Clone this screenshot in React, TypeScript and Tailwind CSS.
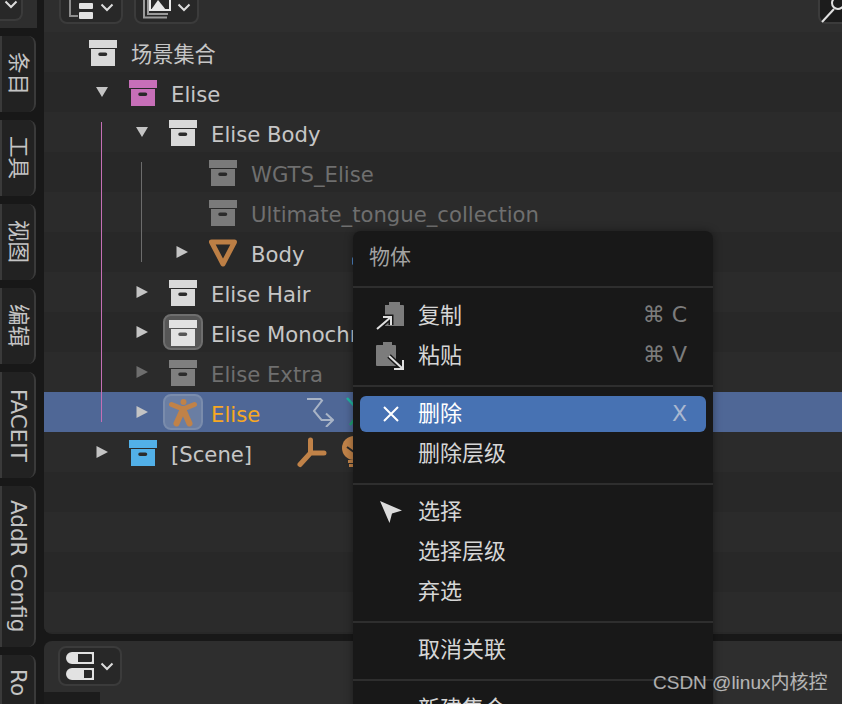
import type { ReactNode } from 'react';

const FONT = "font-['DejaVu_Sans','Noto_Sans_CJK_SC',sans-serif]";

function BoxIcon({ color }: { color: string }) {
  return (
    <svg width="28" height="26" viewBox="0 0 28 26" className="shrink-0">
      <rect x="0" y="0" width="28" height="8" fill={color} />
      <path
        fillRule="evenodd"
        fill={color}
        d="M2 9h24v17H2z M11 12.5a1.5 1.5 0 0 0 0 3.5h5.5a1.5 1.5 0 0 0 0-3.5z"
      />
    </svg>
  );
}

function Tri({ down, dim }: { down?: boolean; dim?: boolean }) {
  return (
    <svg width="12" height="12" viewBox="0 0 12 12">
      <path
        d={down ? 'M0 1h12L6 11z' : 'M0.5 0L12 6L0.5 12z'}
        fill={dim ? '#6e6e6e' : '#c4c4c4'}
      />
    </svg>
  );
}

function Chevron() {
  return (
    <svg width="14" height="9" viewBox="0 0 14 9" fill="none" stroke="#dcdcdc" strokeWidth="2">
      <path d="M1.5 1.5L7 7l5.5-5.5" />
    </svg>
  );
}

function MeshIcon() {
  return (
    <svg width="28" height="28" viewBox="0 0 28 28" fill="none">
      <path d="M2.5 3h23L14 25z" stroke="#bd7f45" strokeWidth="5" strokeLinejoin="round" />
    </svg>
  );
}

function ArmatureIcon() {
  return (
    <svg width="28" height="28" viewBox="0 0 28 28" fill="none" stroke="#c08248" strokeLinecap="round">
      <circle cx="14.5" cy="3" r="3" fill="#c08248" stroke="none" />
      <path d="M2.5 5.5L14 10 25.5 5.5" strokeWidth="5" />
      <path d="M14 10L7.5 24.5M14 10L20.5 24.5" strokeWidth="6" />
    </svg>
  );
}

function ModifierIcon() {
  return (
    <svg width="28" height="30" viewBox="0 0 28 30" fill="none" stroke="#a9b4c6" strokeWidth="2" className="shrink-0">
      <path d="M1 2h13.5l1.5 1.5-8 10.5 7.5 9h11" />
      <path d="M20 16.5l7 6.5-7 7" />
    </svg>
  );
}

function BoneIcon() {
  return (
    <svg width="14" height="30" viewBox="0 0 14 30" fill="none" strokeWidth="2.5" className="ml-3 shrink-0">
      <path d="M1 1l13 14" stroke="#1fb5a0" />
      <path d="M4 28l10-13" stroke="#1fa070" />
    </svg>
  );
}

function EmptyIcon() {
  return (
    <svg width="30" height="32" viewBox="0 0 30 32" fill="none" stroke="#c08248" strokeWidth="5" strokeLinecap="round" className="shrink-0">
      <path d="M13.5 4v13L3 28.5M13.5 17H27" />
    </svg>
  );
}

function BulbIcon() {
  return (
    <svg width="30" height="32" viewBox="0 0 30 32" className="ml-[13px] shrink-0">
      <circle cx="14" cy="12" r="12" fill="#c08248" />
      <path d="M7 11l7 5 7-5M14 16v7" fill="none" stroke="#2b2b2b" strokeWidth="2" />
      <rect x="8" y="24" width="12" height="3" fill="#c08248" />
      <rect x="9" y="28" width="10" height="3" fill="#c08248" />
    </svg>
  );
}

type Row = {
  depth: number;
  label: string;
  icon: ReactNode;
  arrow?: 'down' | 'right';
  dim?: boolean;
  active?: string;
  labelClass?: string;
  bg?: string;
  extra?: ReactNode;
};

const ROWS: Row[] = [
  { depth: 0, label: '场景集合', icon: <BoxIcon color="#d9d9d9" /> },
  { depth: 1, label: 'Elise', icon: <BoxIcon color="#c76fb8" />, arrow: 'down' },
  { depth: 2, label: 'Elise Body', icon: <BoxIcon color="#d9d9d9" />, arrow: 'down' },
  { depth: 3, label: 'WGTS_Elise', icon: <BoxIcon color="#7a7a7a" />, dim: true },
  { depth: 3, label: 'Ultimate_tongue_collection', icon: <BoxIcon color="#7a7a7a" />, dim: true },
  {
    depth: 3,
    label: 'Body',
    icon: <MeshIcon />,
    arrow: 'right',
    extra: <span className="ml-[47px] h-[8px] w-[3px] translate-y-[9px] rounded-sm bg-[#4f86c6]" />,
  },
  { depth: 2, label: 'Elise Hair', icon: <BoxIcon color="#d9d9d9" />, arrow: 'right' },
  {
    depth: 2,
    label: 'Elise Monochrome',
    icon: <BoxIcon color="#e2e2e2" />,
    arrow: 'right',
    active: 'bg-[#565656] border-[#6e6e6e]',
  },
  { depth: 2, label: 'Elise Extra', icon: <BoxIcon color="#7f7f7f" />, arrow: 'right', dim: true },
  {
    depth: 2,
    label: 'Elise',
    icon: <ArmatureIcon />,
    arrow: 'right',
    active: 'bg-[#6a7ea3] border-[#7a8cac]',
    labelClass: 'text-[#f7a823]',
    bg: 'bg-[#4f6796]',
    extra: (
      <>
        <span className="w-[46px] shrink-0" />
        <ModifierIcon />
        <BoneIcon />
      </>
    ),
  },
  {
    depth: 1,
    label: '[Scene]',
    icon: <BoxIcon color="#52b0e8" />,
    arrow: 'right',
    extra: (
      <>
        <span className="w-[45px] shrink-0" />
        <EmptyIcon />
        <BulbIcon />
      </>
    ),
  },
];

const STRIPES = [0, 1, 2, 3];

function TreeRow({ row, index }: { row: Row; index: number }) {
  const stripe = index % 2 === 0 ? 'bg-[#2b2b2b]' : 'bg-[#282828]';
  return (
    <div className={`flex h-10 items-center pl-[5px] ${row.bg ?? stripe}`}>
      <div className="shrink-0" style={{ width: row.depth * 40 }} />
      <div className="flex w-10 shrink-0 items-center pl-[7px]">
        {row.arrow && <Tri down={row.arrow === 'down'} dim={row.dim} />}
      </div>
      <div className="relative flex h-10 w-10 shrink-0 items-center pl-0 pt-0.5">
        {row.active && (
          <div className={`absolute -left-[6px] top-[2px] h-[36px] w-[40px] rounded-lg border-2 ${row.active}`} />
        )}
        <div className="relative">{row.icon}</div>
      </div>
      <span
        className={`ml-[2px] mt-[5px] whitespace-nowrap text-[21.2px] leading-none ${
          row.labelClass ?? (row.dim ? 'text-[#6f6f6f]' : 'text-[#c6c6c6]')
        }`}
      >
        {row.label}
      </span>
      {row.extra}
    </div>
  );
}

const TABS = [
  { label: '条目', h: 'h-[76px] justify-center' },
  { label: '工具', h: 'h-[76px] justify-center' },
  { label: '视图', h: 'h-[76px] justify-center' },
  { label: '编辑', h: 'h-[76px] justify-center' },
  { label: 'FACEIT', h: 'h-[106px] justify-center' },
  { label: 'AddR Config', h: 'h-[161px] justify-center' },
  { label: 'Ro', h: 'h-[60px] justify-start pt-3.5' },
];

function ToolButton({ children, w }: { children: ReactNode; w: string }) {
  return (
    <div className={`-mt-4 flex h-10 items-center justify-center gap-1.5 rounded-lg border-2 border-[#3b3b3b] bg-[#282828] ${w}`}>
      {children}
    </div>
  );
}

function MenuItem({
  label,
  icon,
  keys,
  active,
}: {
  label: string;
  icon?: ReactNode;
  keys?: string;
  active?: boolean;
}) {
  return (
    <div
      className={`mx-[7px] flex items-center rounded-md pr-[19px] ${
        active ? 'h-[36px] bg-[#4772b3] text-white' : 'h-10 text-[#d6d6d6]'
      }`}
    >
      <div className="flex w-[58px] shrink-0 items-center justify-center pl-1">{icon}</div>
      <span className={`text-[22px] leading-none ${active ? '' : 'mt-0.5'}`}>{label}</span>
      {keys && (
        <span className={`ml-auto whitespace-nowrap text-[22px] leading-none ${active ? 'text-[#aab8d0]' : 'text-[#7c7c7c]'}`}>
          {keys}
        </span>
      )}
    </div>
  );
}

function MenuSep() {
  return <div className="h-0.5 bg-[#2e2e2e]" />;
}

function CopyIcon() {
  return (
    <svg width="30" height="30" viewBox="0 0 30 30" fill="none">
      <path d="M9 5h4V2h11v3h3a1 1 0 0 1 1 1v20H9z" fill="#7c7c7c" />
      <path d="M0 30L15 17M7 17h8v8" stroke="#181818" strokeWidth="5" />
      <path d="M1 29L15 17M7 17h8v8" stroke="#e0e0e0" strokeWidth="2" />
    </svg>
  );
}

function PasteIcon() {
  return (
    <svg width="30" height="30" viewBox="0 0 30 30" fill="none">
      <path d="M1 5h6V2h9v3h3a1 1 0 0 1 1 1v20H1a1 1 0 0 1-1-1V6a1 1 0 0 1 1-1z" fill="#7c7c7c" />
      <path d="M13 16L27 29M27 20v9H18" stroke="#181818" strokeWidth="5" />
      <path d="M13 16L27 29M27 20v9H18" stroke="#e0e0e0" strokeWidth="2" />
    </svg>
  );
}

function CloseIcon() {
  return (
    <svg width="16" height="16" viewBox="0 0 16 16" stroke="#fff" strokeWidth="2" fill="none">
      <path d="M1 1l14 14M15 1L1 15" />
    </svg>
  );
}

function CursorIcon() {
  return (
    <svg width="22" height="22" viewBox="0 0 22 22" className="mt-0.5">
      <path d="M0 0L22 9.5 12 12.5 9.5 22z" fill="#dcdcdc" />
    </svg>
  );
}

export default function App() {
  return (
    <div className={`relative flex h-[704px] w-[842px] overflow-hidden bg-[#181818] ${FONT}`}>
      {/* Left tabs */}
      <div className="flex w-11 shrink-0 flex-col">
        <div className="flex h-7 w-[37px] shrink-0 flex-col bg-[#2e2e2e]">
          <div className="-mt-4 flex h-[37px] w-[23px] shrink-0 items-end justify-center rounded-br-lg border-b-2 border-r-2 border-[#3b3b3b] bg-[#282828] pb-2.5">
            <Chevron />
          </div>
        </div>
        <div className="mt-2 flex shrink-0 flex-col gap-2">
          {TABS.map((t) => (
            <div
              key={t.label}
              className={`flex w-[36px] shrink-0 items-center overflow-hidden rounded-r-lg border-y-2 border-r-2 border-[#3a3a3a] bg-[#222222] text-[21.5px] leading-none text-[#c4c4c4] [text-orientation:sideways] [writing-mode:vertical-rl] ${t.h}`}
            >
              <span className="whitespace-nowrap">{t.label}</span>
            </div>
          ))}
        </div>
      </div>

      {/* Outliner and bottom bar */}
      <div className="flex min-w-0 flex-1 flex-col">
        <div className="relative h-[635px] overflow-hidden rounded-bl-lg bg-[#282828]">
          <div className="flex h-8 gap-[11px] bg-[#2e2e2e] pl-[15px]">
            <ToolButton w="w-[64px]">
              <svg width="25" height="24" viewBox="0 0 25 24" fill="none" className="mt-[14px]">
                <path d="M1 0v17h8" stroke="#8c8c8c" strokeWidth="2" />
                <rect x="10" y="4" width="14" height="6" rx="1" fill="#e2e2e2" />
                <rect x="10" y="13" width="14" height="7" rx="1" fill="#e2e2e2" />
              </svg>
              <div className="mt-1.5"><Chevron /></div>
            </ToolButton>
            <ToolButton w="w-[65px]">
              <svg width="28" height="26" viewBox="0 0 28 26" fill="none" className="mt-1.5">
                <path d="M1 0v23.5h23" stroke="#9a9a9a" strokeWidth="2" />
                <path d="M5 0v20h20" stroke="#9a9a9a" strokeWidth="2" />
                <path d="M7 0v16h20V0" stroke="#e8e8e8" strokeWidth="2" />
                <path d="M8 16l7-10 8 10z" fill="#e8e8e8" />
              </svg>
              <div className="mt-1.5"><Chevron /></div>
            </ToolButton>
            <div className="-mt-4 ml-auto h-10 w-10 translate-x-4 rounded-lg border-2 border-[#3b3b3b] bg-[#1c1c1c]">
              <svg width="24" height="24" viewBox="0 0 24 24" fill="none" stroke="#e0e0e0" strokeWidth="2" className="mt-[13px]">
                <circle cx="18" cy="4" r="6" />
                <path d="M2 23l12-13" />
              </svg>
            </div>
          </div>

          {ROWS.map((row, i) => (
            <TreeRow key={i} row={row} index={i} />
          ))}
          {STRIPES.map((i) => (
            <div key={i} className={`h-10 ${(i + ROWS.length) % 2 === 0 ? 'bg-[#2b2b2b]' : 'bg-[#282828]'}`} />
          ))}

          <div className="absolute left-[57px] top-[122px] h-[300px] w-px bg-[#c46fb5]" />
          <div className="absolute left-[97px] top-[162px] h-[100px] w-px bg-[#6c6c6c]" />
        </div>

        <div className="mt-[7px] flex-1 rounded-tl-lg bg-[#2e2e2e]">
          <div className="ml-[14px] mt-[5px] flex h-[40px] w-[64px] items-center justify-center gap-1.5 rounded-lg border-2 border-[#3b3b3b] bg-[#282828]">
            <svg width="28" height="28" viewBox="0 0 28 28">
              <path fillRule="evenodd" d="M6 0h22v12H6a6 6 0 0 1 0-12z M12 2h13a1 1 0 0 1 1 1v6a1 1 0 0 1-1 1H12z" fill="#e2e2e2" />
              <path fillRule="evenodd" d="M6 16h22v12H6a6 6 0 0 1 0-12z M18 18h7a1 1 0 0 1 1 1v6a1 1 0 0 1-1 1h-7z" fill="#e2e2e2" />
            </svg>
            <Chevron />
          </div>
          <div className="mt-[6px] h-3 w-14 bg-[#1c1c1c]" />
        </div>
      </div>

      {/* Context menu */}
      <div className="absolute left-[353px] top-[231px] w-[360px] rounded-t-lg bg-[#181818] shadow-[0_0_8px_rgba(0,0,0,0.4)]">
        <div className="flex h-[55px] items-center pb-0.5 pl-4 text-[21px] leading-none text-[#a2a2a2]">物体</div>
        <MenuSep />
        <div className="pb-2.5 pt-[7px]">
          <MenuItem label="复制" icon={<CopyIcon />} keys="⌘ C" />
          <MenuItem label="粘贴" icon={<PasteIcon />} keys="⌘ V" />
        </div>
        <MenuSep />
        <div className="pb-2.5 pt-[9px]">
          <MenuItem label="删除" icon={<CloseIcon />} keys="X" active />
          <div className="h-px" />
          <MenuItem label="删除层级" />
        </div>
        <MenuSep />
        <div className="pb-2.5 pt-[6px]">
          <MenuItem label="选择" icon={<CursorIcon />} />
          <MenuItem label="选择层级" />
          <MenuItem label="弃选" />
        </div>
        <MenuSep />
        <div className="pb-2.5 pt-[6px]">
          <MenuItem label="取消关联" />
        </div>
        <MenuSep />
        <div className="pt-[7px]">
          <MenuItem label="新建集合" />
        </div>
      </div>

      {/* Watermark */}
      <div className="absolute left-[653px] top-[671px] whitespace-nowrap font-['Liberation_Sans','Noto_Sans_CJK_SC',sans-serif] text-[19px] leading-6 text-white/65">
        CSDN @linux内核控
      </div>
    </div>
  );
}
